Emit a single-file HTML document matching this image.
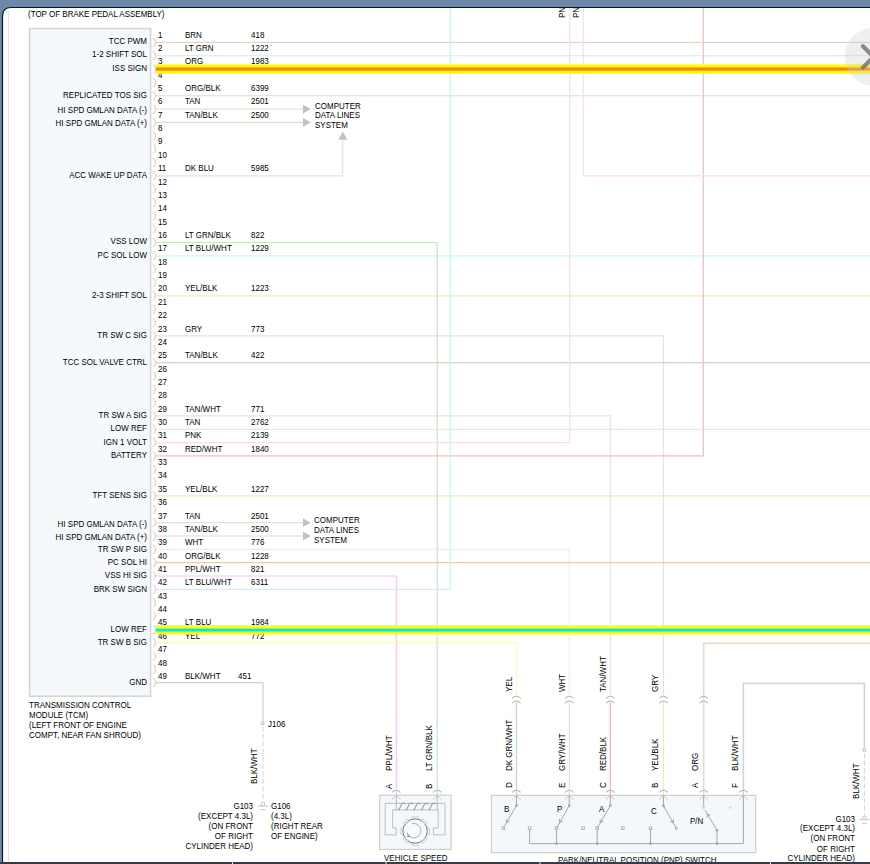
<!DOCTYPE html>
<html><head><meta charset="utf-8">
<style>
html,body{margin:0;padding:0;background:#fff;overflow:hidden;}
body{width:870px;height:864px;position:relative;}
svg{position:absolute;left:0;top:0;}
text{font-family:"Liberation Sans",sans-serif;}
</style></head><body>
<svg width="870" height="864" viewBox="0 0 870 864">
<rect x="0" y="0" width="870" height="864" fill="#ffffff"/>
<rect x="29.6" y="28.6" width="121" height="667.6" fill="#f6f9fc" stroke="#d6d6d6" stroke-width="1.6"/>
<line x1="156.00" y1="42.40" x2="872.00" y2="42.40" stroke="#e2d5ca" stroke-width="1.2" />
<line x1="156.00" y1="55.74" x2="872.00" y2="55.74" stroke="#c4f8c4" stroke-width="1.2" />
<line x1="156.00" y1="95.76" x2="872.00" y2="95.76" stroke="#efd6c2" stroke-width="1.2" />
<line x1="156.00" y1="109.10" x2="303.50" y2="109.10" stroke="#e6e2da" stroke-width="1.2" />
<polygon points="303,104.70 310.8,109.10 303,113.50" fill="#c2c2c2"/>
<line x1="156.00" y1="122.44" x2="303.50" y2="122.44" stroke="#dedbd2" stroke-width="1.2" />
<polygon points="303,118.04 310.8,122.44 303,126.84" fill="#c2c2c2"/>
<polyline points="156.00,175.80 342.80,175.80 342.80,139.50" fill="none" stroke="#dce2f2" stroke-width="1.2" />
<polygon points="338.3,139.8 342.8,131.6 347.3,139.8" fill="#c2c2c2"/>
<polyline points="156.00,242.50 437.20,242.50 437.20,795.00" fill="none" stroke="#c8e6c0" stroke-width="1.2" />
<line x1="156.00" y1="255.84" x2="872.00" y2="255.84" stroke="#c0fafa" stroke-width="1.2" />
<line x1="156.00" y1="295.86" x2="872.00" y2="295.86" stroke="#ecebc0" stroke-width="1.2" />
<polyline points="156.00,335.88 663.50,335.88 663.50,696.00" fill="none" stroke="#e2e2e2" stroke-width="1.2" />
<line x1="156.00" y1="362.56" x2="872.00" y2="362.56" stroke="#d6d4c8" stroke-width="1.2" />
<polyline points="156.00,415.92 610.30,415.92 610.30,696.00" fill="none" stroke="#e6e4d8" stroke-width="1.2" />
<line x1="156.00" y1="429.26" x2="872.00" y2="429.26" stroke="#e4e2d4" stroke-width="1.2" />
<polyline points="156.00,442.60 569.80,442.60 569.80,8.00" fill="none" stroke="#fbdde8" stroke-width="1.2" />
<polyline points="156.00,455.94 703.40,455.94 703.40,8.00" fill="none" stroke="#fcbcc4" stroke-width="1.2" />
<line x1="156.00" y1="495.96" x2="872.00" y2="495.96" stroke="#ecebb4" stroke-width="1.2" />
<line x1="156.00" y1="522.64" x2="303.50" y2="522.64" stroke="#e6e2da" stroke-width="1.2" />
<polygon points="303,518.24 310.8,522.64 303,527.04" fill="#c2c2c2"/>
<line x1="156.00" y1="535.98" x2="303.50" y2="535.98" stroke="#dedbd2" stroke-width="1.2" />
<polygon points="303,531.58 310.8,535.98 303,540.38" fill="#c2c2c2"/>
<polyline points="156.00,549.32 569.30,549.32 569.30,696.00" fill="none" stroke="#eeeeee" stroke-width="1.2" />
<line x1="156.00" y1="562.66" x2="872.00" y2="562.66" stroke="#e6cdb6" stroke-width="1.2" />
<polyline points="156.00,576.00 396.30,576.00 396.30,795.00" fill="none" stroke="#f6c6f6" stroke-width="1.2" />
<polyline points="156.00,589.34 450.20,589.34 450.20,8.00" fill="none" stroke="#c0f8f8" stroke-width="1.2" />
<polyline points="156.00,642.70 516.50,642.70 516.50,696.00" fill="none" stroke="#f8f8c0" stroke-width="1.2" />
<polyline points="156.00,682.72 263.00,682.72 263.00,721.50" fill="none" stroke="#d0d0d0" stroke-width="1.2" />
<polyline points="583.30,8.00 583.30,175.80 872.00,175.80" fill="none" stroke="#fbdde8" stroke-width="1.2" />
<polyline points="703.70,795.00 703.70,643.30 872.00,643.30" fill="none" stroke="#f6d6bc" stroke-width="1.5" />
<polyline points="743.40,795.00 743.40,683.60 864.40,683.60 864.40,747.50" fill="none" stroke="#d2d2d2" stroke-width="1.5" />
<line x1="516.50" y1="701.30" x2="516.50" y2="795.00" stroke="#c6d8c6" stroke-width="1.3" />
<path d="M512.20,698.50 Q516.50,694.10 520.80,698.50" fill="none" stroke="#b9b9b9" stroke-width="1.05"/>
<path d="M512.20,703.20 Q516.50,698.80 520.80,703.20" fill="none" stroke="#b9b9b9" stroke-width="1.05"/>
<line x1="569.30" y1="701.30" x2="569.30" y2="795.00" stroke="#e4e4e4" stroke-width="1.3" />
<path d="M565.00,698.50 Q569.30,694.10 573.60,698.50" fill="none" stroke="#b9b9b9" stroke-width="1.05"/>
<path d="M565.00,703.20 Q569.30,698.80 573.60,703.20" fill="none" stroke="#b9b9b9" stroke-width="1.05"/>
<line x1="610.30" y1="701.30" x2="610.30" y2="795.00" stroke="#f2b8b8" stroke-width="1.3" />
<path d="M606.00,698.50 Q610.30,694.10 614.60,698.50" fill="none" stroke="#b9b9b9" stroke-width="1.05"/>
<path d="M606.00,703.20 Q610.30,698.80 614.60,703.20" fill="none" stroke="#b9b9b9" stroke-width="1.05"/>
<line x1="663.50" y1="701.30" x2="663.50" y2="795.00" stroke="#ecebb0" stroke-width="1.3" />
<path d="M659.20,698.50 Q663.50,694.10 667.80,698.50" fill="none" stroke="#b9b9b9" stroke-width="1.05"/>
<path d="M659.20,703.20 Q663.50,698.80 667.80,703.20" fill="none" stroke="#b9b9b9" stroke-width="1.05"/>
<path d="M699.40,698.50 Q703.70,694.10 708.00,698.50" fill="none" stroke="#b9b9b9" stroke-width="1.05"/>
<path d="M699.40,703.20 Q703.70,698.80 708.00,703.20" fill="none" stroke="#b9b9b9" stroke-width="1.05"/>
<rect x="379.7" y="795.2" width="71.3" height="54.2" fill="#f5f8fb" stroke="#cfcfcf" stroke-width="1.2"/>
<path d="M385.2,803.4 H445 V834.8 H433.5 V827.9 H438.1 V809.9 H392.6 V827.9 H396.2 V834.8 H385.2 Z" fill="#f5f8fb" stroke="#c8c8c8" stroke-width="1.2"/>
<path d="M392.00,792.40 Q396.30,788.00 400.60,792.40" fill="none" stroke="#b9b9b9" stroke-width="1.05"/>
<polyline points="392.00,799.50 396.30,795.60 400.60,799.50" fill="none" stroke="#c6c6c6" stroke-width="1" />
<line x1="396.30" y1="795.50" x2="396.30" y2="810.00" stroke="#b8b8b8" stroke-width="1" />
<path d="M432.90,792.40 Q437.20,788.00 441.50,792.40" fill="none" stroke="#b9b9b9" stroke-width="1.05"/>
<polyline points="432.90,799.50 437.20,795.60 441.50,799.50" fill="none" stroke="#c6c6c6" stroke-width="1" />
<line x1="437.20" y1="795.50" x2="437.20" y2="810.00" stroke="#b8b8b8" stroke-width="1" />
<path d="M396.3,810 M398.5,810.5 L401.9,803.8 Q404.1,802 405.5,804.2 M406.1,810.5 L409.5,803.8 Q411.7,802 413.1,804.2 M413.7,810.5 L417.1,803.8 Q419.3,802 420.7,804.2 M421.3,810.5 L424.7,803.8 Q426.9,802 428.3,804.2 M428.9,810.5 L432.3,803.8 Q434.5,802 435.9,804.2 " fill="none" stroke="#9a9a9a" stroke-width="1.1"/>
<circle cx="415.1" cy="831.1" r="12.2" fill="#f7f9fb" stroke="#6a6a6a" stroke-width="1"/>
<rect x="-3" y="-14.2" width="6" height="2.2" fill="none" stroke="#c4c4c4" stroke-width="0.8" transform="translate(415.1,831.1) rotate(0)"/>
<rect x="-3" y="-14.2" width="6" height="2.2" fill="none" stroke="#c4c4c4" stroke-width="0.8" transform="translate(415.1,831.1) rotate(45)"/>
<rect x="-3" y="-14.2" width="6" height="2.2" fill="none" stroke="#c4c4c4" stroke-width="0.8" transform="translate(415.1,831.1) rotate(90)"/>
<rect x="-3" y="-14.2" width="6" height="2.2" fill="none" stroke="#c4c4c4" stroke-width="0.8" transform="translate(415.1,831.1) rotate(135)"/>
<rect x="-3" y="-14.2" width="6" height="2.2" fill="none" stroke="#c4c4c4" stroke-width="0.8" transform="translate(415.1,831.1) rotate(180)"/>
<rect x="-3" y="-14.2" width="6" height="2.2" fill="none" stroke="#c4c4c4" stroke-width="0.8" transform="translate(415.1,831.1) rotate(225)"/>
<rect x="-3" y="-14.2" width="6" height="2.2" fill="none" stroke="#c4c4c4" stroke-width="0.8" transform="translate(415.1,831.1) rotate(270)"/>
<rect x="-3" y="-14.2" width="6" height="2.2" fill="none" stroke="#c4c4c4" stroke-width="0.8" transform="translate(415.1,831.1) rotate(315)"/>
<path d="M412,823.6 A7.2,7.2 0 1 1 409.5,836.5" fill="none" stroke="#bdbdbd" stroke-width="1.1"/>
<path d="M407.0,832.8 L409.6,836.6 L406.6,836.0" fill="none" stroke="#777" stroke-width="0.9"/>
<rect x="491.5" y="795.4" width="264.2" height="57.3" fill="#f5f8fb" stroke="#cfcfcf" stroke-width="1.2"/>
<path d="M512.20,792.40 Q516.50,788.00 520.80,792.40" fill="none" stroke="#b9b9b9" stroke-width="1.05"/>
<polyline points="512.20,799.50 516.50,795.60 520.80,799.50" fill="none" stroke="#c6c6c6" stroke-width="1" />
<path d="M565.00,792.40 Q569.30,788.00 573.60,792.40" fill="none" stroke="#b9b9b9" stroke-width="1.05"/>
<polyline points="565.00,799.50 569.30,795.60 573.60,799.50" fill="none" stroke="#c6c6c6" stroke-width="1" />
<path d="M606.00,792.40 Q610.30,788.00 614.60,792.40" fill="none" stroke="#b9b9b9" stroke-width="1.05"/>
<polyline points="606.00,799.50 610.30,795.60 614.60,799.50" fill="none" stroke="#c6c6c6" stroke-width="1" />
<path d="M659.20,792.40 Q663.50,788.00 667.80,792.40" fill="none" stroke="#b9b9b9" stroke-width="1.05"/>
<polyline points="659.20,799.50 663.50,795.60 667.80,799.50" fill="none" stroke="#c6c6c6" stroke-width="1" />
<path d="M699.40,792.40 Q703.70,788.00 708.00,792.40" fill="none" stroke="#b9b9b9" stroke-width="1.05"/>
<polyline points="699.40,799.50 703.70,795.60 708.00,799.50" fill="none" stroke="#c6c6c6" stroke-width="1" />
<path d="M739.10,792.40 Q743.40,788.00 747.70,792.40" fill="none" stroke="#b9b9b9" stroke-width="1.05"/>
<polyline points="739.10,799.50 743.40,795.60 747.70,799.50" fill="none" stroke="#c6c6c6" stroke-width="1" />
<line x1="516.50" y1="795.50" x2="516.50" y2="805.60" stroke="#a8a8a8" stroke-width="1" />
<circle cx="516.50" cy="805.60" r="1.3" fill="#a0a0a0"/>
<line x1="516.50" y1="805.60" x2="503.40" y2="828.00" stroke="#a8a8a8" stroke-width="1" />
<polyline points="506.40,819.10 506.43,822.82 509.68,821.02" fill="none" stroke="#a8a8a8" stroke-width="1" />
<rect x="502.10" y="826.90" width="2.6" height="2.6" fill="none" stroke="#b0b0b0" stroke-width="0.9"/>
<rect x="528.30" y="826.90" width="2.6" height="2.6" fill="none" stroke="#b0b0b0" stroke-width="0.9"/>
<line x1="529.60" y1="829.50" x2="529.60" y2="843.60" stroke="#a8a8a8" stroke-width="1" />
<line x1="569.30" y1="795.50" x2="569.30" y2="805.60" stroke="#a8a8a8" stroke-width="1" />
<circle cx="569.30" cy="805.60" r="1.3" fill="#a0a0a0"/>
<line x1="569.30" y1="805.60" x2="556.60" y2="828.00" stroke="#a8a8a8" stroke-width="1" />
<polyline points="559.48,819.06 559.56,822.78 562.79,820.93" fill="none" stroke="#a8a8a8" stroke-width="1" />
<rect x="555.30" y="826.90" width="2.6" height="2.6" fill="none" stroke="#b0b0b0" stroke-width="0.9"/>
<line x1="556.60" y1="829.50" x2="556.60" y2="843.60" stroke="#a8a8a8" stroke-width="1" />
<circle cx="556.60" cy="843.60" r="1.4" fill="#a0a0a0"/>
<rect x="581.70" y="826.90" width="2.6" height="2.6" fill="none" stroke="#b0b0b0" stroke-width="0.9"/>
<line x1="610.30" y1="795.50" x2="610.30" y2="805.60" stroke="#a8a8a8" stroke-width="1" />
<circle cx="610.30" cy="805.60" r="1.3" fill="#a0a0a0"/>
<line x1="610.30" y1="805.60" x2="597.20" y2="828.00" stroke="#a8a8a8" stroke-width="1" />
<polyline points="600.20,819.10 600.23,822.82 603.48,821.02" fill="none" stroke="#a8a8a8" stroke-width="1" />
<rect x="595.90" y="826.90" width="2.6" height="2.6" fill="none" stroke="#b0b0b0" stroke-width="0.9"/>
<line x1="597.20" y1="829.50" x2="597.20" y2="843.60" stroke="#a8a8a8" stroke-width="1" />
<circle cx="597.20" cy="843.60" r="1.4" fill="#a0a0a0"/>
<rect x="621.60" y="826.90" width="2.6" height="2.6" fill="none" stroke="#b0b0b0" stroke-width="0.9"/>
<line x1="663.50" y1="795.50" x2="663.50" y2="805.90" stroke="#a8a8a8" stroke-width="1" />
<circle cx="663.50" cy="805.90" r="1.3" fill="#a0a0a0"/>
<line x1="663.50" y1="805.90" x2="676.40" y2="828.30" stroke="#a8a8a8" stroke-width="1" />
<polyline points="670.16,821.28 673.41,823.10 673.46,819.38" fill="none" stroke="#a8a8a8" stroke-width="1" />
<circle cx="676.4" cy="828.3" r="1.2" fill="none" stroke="#a8a8a8" stroke-width="0.9"/>
<rect x="649.20" y="827.00" width="2.6" height="2.6" fill="none" stroke="#b0b0b0" stroke-width="0.9"/>
<line x1="650.50" y1="829.60" x2="650.50" y2="843.60" stroke="#a8a8a8" stroke-width="1" />
<circle cx="650.50" cy="843.60" r="1.4" fill="#a0a0a0"/>
<line x1="703.70" y1="795.50" x2="703.70" y2="806.20" stroke="#a8a8a8" stroke-width="1" />
<circle cx="703.70" cy="807.60" r="1.4" fill="#cfcfcf"/>
<line x1="705.20" y1="810.30" x2="717.00" y2="830.50" stroke="#a8a8a8" stroke-width="1" />
<polyline points="707.19,817.48 707.22,813.75 710.47,815.56" fill="none" stroke="#a8a8a8" stroke-width="1" />
<circle cx="717.00" cy="830.30" r="1.3" fill="#a0a0a0"/>
<line x1="717.00" y1="830.30" x2="717.00" y2="843.60" stroke="#a8a8a8" stroke-width="1" />
<circle cx="717.00" cy="843.60" r="1.4" fill="#a0a0a0"/>
<circle cx="730.20" cy="807.60" r="1.4" fill="#d8d8d8"/>
<polyline points="529.60,843.60 743.40,843.60 743.40,795.50" fill="none" stroke="#a8a8a8" stroke-width="1" />
<rect x="261.20" y="722.10" width="2.6" height="2.6" fill="none" stroke="#c0c0c0" stroke-width="0.9"/>
<line x1="263.00" y1="726.50" x2="263.00" y2="802.00" stroke="#d4d4d4" stroke-width="1" stroke-dasharray="5,2.5"/>
<rect x="261.50" y="802.60" width="3" height="2.8" fill="none" stroke="#c8c8c8" stroke-width="0.8"/>
<line x1="257.80" y1="806.00" x2="268.20" y2="806.00" stroke="#c4c4c4" stroke-width="1" />
<line x1="260.40" y1="809.60" x2="265.60" y2="809.60" stroke="#c8c8c8" stroke-width="1" />
<rect x="863.10" y="748.70" width="2.6" height="2.6" fill="none" stroke="#c0c0c0" stroke-width="0.9"/>
<line x1="864.40" y1="753.20" x2="864.40" y2="815.50" stroke="#d4d4d4" stroke-width="1" stroke-dasharray="5,2.5"/>
<rect x="862.90" y="816.30" width="3" height="2.8" fill="none" stroke="#c8c8c8" stroke-width="0.8"/>
<line x1="859.20" y1="819.70" x2="869.60" y2="819.70" stroke="#c4c4c4" stroke-width="1" />
<line x1="861.80" y1="823.30" x2="867.00" y2="823.30" stroke="#c8c8c8" stroke-width="1" />
<path d="M153.4,37.80 Q157.6,42.40 153.4,47.00" fill="none" stroke="#c8c8c8" stroke-width="1"/>
<path d="M153.4,51.14 Q157.6,55.74 153.4,60.34" fill="none" stroke="#c8c8c8" stroke-width="1"/>
<path d="M153.4,64.48 Q157.6,69.08 153.4,73.68" fill="none" stroke="#c8c8c8" stroke-width="1"/>
<path d="M153.4,77.82 Q157.6,82.42 153.4,87.02" fill="none" stroke="#c8c8c8" stroke-width="1"/>
<path d="M153.4,91.16 Q157.6,95.76 153.4,100.36" fill="none" stroke="#c8c8c8" stroke-width="1"/>
<path d="M153.4,104.50 Q157.6,109.10 153.4,113.70" fill="none" stroke="#c8c8c8" stroke-width="1"/>
<path d="M153.4,117.84 Q157.6,122.44 153.4,127.04" fill="none" stroke="#c8c8c8" stroke-width="1"/>
<path d="M153.4,131.18 Q157.6,135.78 153.4,140.38" fill="none" stroke="#c8c8c8" stroke-width="1"/>
<path d="M153.4,144.52 Q157.6,149.12 153.4,153.72" fill="none" stroke="#c8c8c8" stroke-width="1"/>
<path d="M153.4,157.86 Q157.6,162.46 153.4,167.06" fill="none" stroke="#c8c8c8" stroke-width="1"/>
<path d="M153.4,171.20 Q157.6,175.80 153.4,180.40" fill="none" stroke="#c8c8c8" stroke-width="1"/>
<path d="M153.4,184.54 Q157.6,189.14 153.4,193.74" fill="none" stroke="#c8c8c8" stroke-width="1"/>
<path d="M153.4,197.88 Q157.6,202.48 153.4,207.08" fill="none" stroke="#c8c8c8" stroke-width="1"/>
<path d="M153.4,211.22 Q157.6,215.82 153.4,220.42" fill="none" stroke="#c8c8c8" stroke-width="1"/>
<path d="M153.4,224.56 Q157.6,229.16 153.4,233.76" fill="none" stroke="#c8c8c8" stroke-width="1"/>
<path d="M153.4,237.90 Q157.6,242.50 153.4,247.10" fill="none" stroke="#c8c8c8" stroke-width="1"/>
<path d="M153.4,251.24 Q157.6,255.84 153.4,260.44" fill="none" stroke="#c8c8c8" stroke-width="1"/>
<path d="M153.4,264.58 Q157.6,269.18 153.4,273.78" fill="none" stroke="#c8c8c8" stroke-width="1"/>
<path d="M153.4,277.92 Q157.6,282.52 153.4,287.12" fill="none" stroke="#c8c8c8" stroke-width="1"/>
<path d="M153.4,291.26 Q157.6,295.86 153.4,300.46" fill="none" stroke="#c8c8c8" stroke-width="1"/>
<path d="M153.4,304.60 Q157.6,309.20 153.4,313.80" fill="none" stroke="#c8c8c8" stroke-width="1"/>
<path d="M153.4,317.94 Q157.6,322.54 153.4,327.14" fill="none" stroke="#c8c8c8" stroke-width="1"/>
<path d="M153.4,331.28 Q157.6,335.88 153.4,340.48" fill="none" stroke="#c8c8c8" stroke-width="1"/>
<path d="M153.4,344.62 Q157.6,349.22 153.4,353.82" fill="none" stroke="#c8c8c8" stroke-width="1"/>
<path d="M153.4,357.96 Q157.6,362.56 153.4,367.16" fill="none" stroke="#c8c8c8" stroke-width="1"/>
<path d="M153.4,371.30 Q157.6,375.90 153.4,380.50" fill="none" stroke="#c8c8c8" stroke-width="1"/>
<path d="M153.4,384.64 Q157.6,389.24 153.4,393.84" fill="none" stroke="#c8c8c8" stroke-width="1"/>
<path d="M153.4,397.98 Q157.6,402.58 153.4,407.18" fill="none" stroke="#c8c8c8" stroke-width="1"/>
<path d="M153.4,411.32 Q157.6,415.92 153.4,420.52" fill="none" stroke="#c8c8c8" stroke-width="1"/>
<path d="M153.4,424.66 Q157.6,429.26 153.4,433.86" fill="none" stroke="#c8c8c8" stroke-width="1"/>
<path d="M153.4,438.00 Q157.6,442.60 153.4,447.20" fill="none" stroke="#c8c8c8" stroke-width="1"/>
<path d="M153.4,451.34 Q157.6,455.94 153.4,460.54" fill="none" stroke="#c8c8c8" stroke-width="1"/>
<path d="M153.4,464.68 Q157.6,469.28 153.4,473.88" fill="none" stroke="#c8c8c8" stroke-width="1"/>
<path d="M153.4,478.02 Q157.6,482.62 153.4,487.22" fill="none" stroke="#c8c8c8" stroke-width="1"/>
<path d="M153.4,491.36 Q157.6,495.96 153.4,500.56" fill="none" stroke="#c8c8c8" stroke-width="1"/>
<path d="M153.4,504.70 Q157.6,509.30 153.4,513.90" fill="none" stroke="#c8c8c8" stroke-width="1"/>
<path d="M153.4,518.04 Q157.6,522.64 153.4,527.24" fill="none" stroke="#c8c8c8" stroke-width="1"/>
<path d="M153.4,531.38 Q157.6,535.98 153.4,540.58" fill="none" stroke="#c8c8c8" stroke-width="1"/>
<path d="M153.4,544.72 Q157.6,549.32 153.4,553.92" fill="none" stroke="#c8c8c8" stroke-width="1"/>
<path d="M153.4,558.06 Q157.6,562.66 153.4,567.26" fill="none" stroke="#c8c8c8" stroke-width="1"/>
<path d="M153.4,571.40 Q157.6,576.00 153.4,580.60" fill="none" stroke="#c8c8c8" stroke-width="1"/>
<path d="M153.4,584.74 Q157.6,589.34 153.4,593.94" fill="none" stroke="#c8c8c8" stroke-width="1"/>
<path d="M153.4,598.08 Q157.6,602.68 153.4,607.28" fill="none" stroke="#c8c8c8" stroke-width="1"/>
<path d="M153.4,611.42 Q157.6,616.02 153.4,620.62" fill="none" stroke="#c8c8c8" stroke-width="1"/>
<path d="M153.4,624.76 Q157.6,629.36 153.4,633.96" fill="none" stroke="#c8c8c8" stroke-width="1"/>
<path d="M153.4,638.10 Q157.6,642.70 153.4,647.30" fill="none" stroke="#c8c8c8" stroke-width="1"/>
<path d="M153.4,651.44 Q157.6,656.04 153.4,660.64" fill="none" stroke="#c8c8c8" stroke-width="1"/>
<path d="M153.4,664.78 Q157.6,669.38 153.4,673.98" fill="none" stroke="#c8c8c8" stroke-width="1"/>
<path d="M153.4,678.12 Q157.6,682.72 153.4,687.32" fill="none" stroke="#c8c8c8" stroke-width="1"/>
<g font-family="Liberation Sans, sans-serif" font-size="8px" fill="#000">
<text transform="translate(28,17) scale(1,1.09)" text-anchor="start" >(TOP OF BRAKE PEDAL ASSEMBLY)</text>
<text transform="translate(158,38) scale(1,1.09)" text-anchor="start" >1</text>
<text transform="translate(158,51) scale(1,1.09)" text-anchor="start" >2</text>
<text transform="translate(158,64) scale(1,1.09)" text-anchor="start" >3</text>
<text transform="translate(158,78) scale(1,1.09)" text-anchor="start" >4</text>
<text transform="translate(158,91) scale(1,1.09)" text-anchor="start" >5</text>
<text transform="translate(158,104) scale(1,1.09)" text-anchor="start" >6</text>
<text transform="translate(158,118) scale(1,1.09)" text-anchor="start" >7</text>
<text transform="translate(158,131) scale(1,1.09)" text-anchor="start" >8</text>
<text transform="translate(158,144) scale(1,1.09)" text-anchor="start" >9</text>
<text transform="translate(158,158) scale(1,1.09)" text-anchor="start" >10</text>
<text transform="translate(158,171) scale(1,1.09)" text-anchor="start" >11</text>
<text transform="translate(158,185) scale(1,1.09)" text-anchor="start" >12</text>
<text transform="translate(158,198) scale(1,1.09)" text-anchor="start" >13</text>
<text transform="translate(158,211) scale(1,1.09)" text-anchor="start" >14</text>
<text transform="translate(158,225) scale(1,1.09)" text-anchor="start" >15</text>
<text transform="translate(158,238) scale(1,1.09)" text-anchor="start" >16</text>
<text transform="translate(158,251) scale(1,1.09)" text-anchor="start" >17</text>
<text transform="translate(158,265) scale(1,1.09)" text-anchor="start" >18</text>
<text transform="translate(158,278) scale(1,1.09)" text-anchor="start" >19</text>
<text transform="translate(158,291) scale(1,1.09)" text-anchor="start" >20</text>
<text transform="translate(158,305) scale(1,1.09)" text-anchor="start" >21</text>
<text transform="translate(158,318) scale(1,1.09)" text-anchor="start" >22</text>
<text transform="translate(158,332) scale(1,1.09)" text-anchor="start" >23</text>
<text transform="translate(158,345) scale(1,1.09)" text-anchor="start" >24</text>
<text transform="translate(158,358) scale(1,1.09)" text-anchor="start" >25</text>
<text transform="translate(158,372) scale(1,1.09)" text-anchor="start" >26</text>
<text transform="translate(158,385) scale(1,1.09)" text-anchor="start" >27</text>
<text transform="translate(158,398) scale(1,1.09)" text-anchor="start" >28</text>
<text transform="translate(158,412) scale(1,1.09)" text-anchor="start" >29</text>
<text transform="translate(158,425) scale(1,1.09)" text-anchor="start" >30</text>
<text transform="translate(158,438) scale(1,1.09)" text-anchor="start" >31</text>
<text transform="translate(158,452) scale(1,1.09)" text-anchor="start" >32</text>
<text transform="translate(158,465) scale(1,1.09)" text-anchor="start" >33</text>
<text transform="translate(158,478) scale(1,1.09)" text-anchor="start" >34</text>
<text transform="translate(158,492) scale(1,1.09)" text-anchor="start" >35</text>
<text transform="translate(158,505) scale(1,1.09)" text-anchor="start" >36</text>
<text transform="translate(158,519) scale(1,1.09)" text-anchor="start" >37</text>
<text transform="translate(158,532) scale(1,1.09)" text-anchor="start" >38</text>
<text transform="translate(158,545) scale(1,1.09)" text-anchor="start" >39</text>
<text transform="translate(158,559) scale(1,1.09)" text-anchor="start" >40</text>
<text transform="translate(158,572) scale(1,1.09)" text-anchor="start" >41</text>
<text transform="translate(158,585) scale(1,1.09)" text-anchor="start" >42</text>
<text transform="translate(158,599) scale(1,1.09)" text-anchor="start" >43</text>
<text transform="translate(158,612) scale(1,1.09)" text-anchor="start" >44</text>
<text transform="translate(158,625) scale(1,1.09)" text-anchor="start" >45</text>
<text transform="translate(158,639) scale(1,1.09)" text-anchor="start" >46</text>
<text transform="translate(158,652) scale(1,1.09)" text-anchor="start" >47</text>
<text transform="translate(158,666) scale(1,1.09)" text-anchor="start" >48</text>
<text transform="translate(158,679) scale(1,1.09)" text-anchor="start" >49</text>
<text transform="translate(185,38) scale(1,1.09)" text-anchor="start" >BRN</text>
<text transform="translate(251,38) scale(1,1.09)" text-anchor="start" >418</text>
<text transform="translate(185,51) scale(1,1.09)" text-anchor="start" >LT GRN</text>
<text transform="translate(251,51) scale(1,1.09)" text-anchor="start" >1222</text>
<text transform="translate(185,64) scale(1,1.09)" text-anchor="start" >ORG</text>
<text transform="translate(251,64) scale(1,1.09)" text-anchor="start" >1983</text>
<text transform="translate(185,91) scale(1,1.09)" text-anchor="start" >ORG/BLK</text>
<text transform="translate(251,91) scale(1,1.09)" text-anchor="start" >6399</text>
<text transform="translate(185,104) scale(1,1.09)" text-anchor="start" >TAN</text>
<text transform="translate(251,104) scale(1,1.09)" text-anchor="start" >2501</text>
<text transform="translate(185,118) scale(1,1.09)" text-anchor="start" >TAN/BLK</text>
<text transform="translate(251,118) scale(1,1.09)" text-anchor="start" >2500</text>
<text transform="translate(185,171) scale(1,1.09)" text-anchor="start" >DK BLU</text>
<text transform="translate(251,171) scale(1,1.09)" text-anchor="start" >5985</text>
<text transform="translate(185,238) scale(1,1.09)" text-anchor="start" >LT GRN/BLK</text>
<text transform="translate(251,238) scale(1,1.09)" text-anchor="start" >822</text>
<text transform="translate(185,251) scale(1,1.09)" text-anchor="start" >LT BLU/WHT</text>
<text transform="translate(251,251) scale(1,1.09)" text-anchor="start" >1229</text>
<text transform="translate(185,291) scale(1,1.09)" text-anchor="start" >YEL/BLK</text>
<text transform="translate(251,291) scale(1,1.09)" text-anchor="start" >1223</text>
<text transform="translate(185,332) scale(1,1.09)" text-anchor="start" >GRY</text>
<text transform="translate(251,332) scale(1,1.09)" text-anchor="start" >773</text>
<text transform="translate(185,358) scale(1,1.09)" text-anchor="start" >TAN/BLK</text>
<text transform="translate(251,358) scale(1,1.09)" text-anchor="start" >422</text>
<text transform="translate(185,412) scale(1,1.09)" text-anchor="start" >TAN/WHT</text>
<text transform="translate(251,412) scale(1,1.09)" text-anchor="start" >771</text>
<text transform="translate(185,425) scale(1,1.09)" text-anchor="start" >TAN</text>
<text transform="translate(251,425) scale(1,1.09)" text-anchor="start" >2762</text>
<text transform="translate(185,438) scale(1,1.09)" text-anchor="start" >PNK</text>
<text transform="translate(251,438) scale(1,1.09)" text-anchor="start" >2139</text>
<text transform="translate(185,452) scale(1,1.09)" text-anchor="start" >RED/WHT</text>
<text transform="translate(251,452) scale(1,1.09)" text-anchor="start" >1840</text>
<text transform="translate(185,492) scale(1,1.09)" text-anchor="start" >YEL/BLK</text>
<text transform="translate(251,492) scale(1,1.09)" text-anchor="start" >1227</text>
<text transform="translate(185,519) scale(1,1.09)" text-anchor="start" >TAN</text>
<text transform="translate(251,519) scale(1,1.09)" text-anchor="start" >2501</text>
<text transform="translate(185,532) scale(1,1.09)" text-anchor="start" >TAN/BLK</text>
<text transform="translate(251,532) scale(1,1.09)" text-anchor="start" >2500</text>
<text transform="translate(185,545) scale(1,1.09)" text-anchor="start" >WHT</text>
<text transform="translate(251,545) scale(1,1.09)" text-anchor="start" >776</text>
<text transform="translate(185,559) scale(1,1.09)" text-anchor="start" >ORG/BLK</text>
<text transform="translate(251,559) scale(1,1.09)" text-anchor="start" >1228</text>
<text transform="translate(185,572) scale(1,1.09)" text-anchor="start" >PPL/WHT</text>
<text transform="translate(251,572) scale(1,1.09)" text-anchor="start" >821</text>
<text transform="translate(185,585) scale(1,1.09)" text-anchor="start" >LT BLU/WHT</text>
<text transform="translate(251,585) scale(1,1.09)" text-anchor="start" >6311</text>
<text transform="translate(185,625) scale(1,1.09)" text-anchor="start" >LT BLU</text>
<text transform="translate(251,625) scale(1,1.09)" text-anchor="start" >1984</text>
<text transform="translate(185,639) scale(1,1.09)" text-anchor="start" >YEL</text>
<text transform="translate(251,639) scale(1,1.09)" text-anchor="start" >772</text>
<text transform="translate(185,679) scale(1,1.09)" text-anchor="start" >BLK/WHT</text>
<text transform="translate(238,679) scale(1,1.09)" text-anchor="start" >451</text>
<text transform="translate(147,44) scale(1,1.09)" text-anchor="end" >TCC PWM</text>
<text transform="translate(147,57) scale(1,1.09)" text-anchor="end" >1-2 SHIFT SOL</text>
<text transform="translate(147,71) scale(1,1.09)" text-anchor="end" >ISS SIGN</text>
<text transform="translate(147,98) scale(1,1.09)" text-anchor="end" >REPLICATED TOS SIG</text>
<text transform="translate(147,113) scale(1,1.09)" text-anchor="end" >HI SPD GMLAN DATA (-)</text>
<text transform="translate(147,126) scale(1,1.09)" text-anchor="end" >HI SPD GMLAN DATA (+)</text>
<text transform="translate(147,178) scale(1,1.09)" text-anchor="end" >ACC WAKE UP DATA</text>
<text transform="translate(147,244) scale(1,1.09)" text-anchor="end" >VSS LOW</text>
<text transform="translate(147,258) scale(1,1.09)" text-anchor="end" >PC SOL LOW</text>
<text transform="translate(147,298) scale(1,1.09)" text-anchor="end" >2-3 SHIFT SOL</text>
<text transform="translate(147,338) scale(1,1.09)" text-anchor="end" >TR SW C SIG</text>
<text transform="translate(147,365) scale(1,1.09)" text-anchor="end" >TCC SOL VALVE CTRL</text>
<text transform="translate(147,418) scale(1,1.09)" text-anchor="end" >TR SW A SIG</text>
<text transform="translate(147,431) scale(1,1.09)" text-anchor="end" >LOW REF</text>
<text transform="translate(147,445) scale(1,1.09)" text-anchor="end" >IGN 1 VOLT</text>
<text transform="translate(147,458) scale(1,1.09)" text-anchor="end" >BATTERY</text>
<text transform="translate(147,498) scale(1,1.09)" text-anchor="end" >TFT SENS SIG</text>
<text transform="translate(147,527) scale(1,1.09)" text-anchor="end" >HI SPD GMLAN DATA (-)</text>
<text transform="translate(147,540) scale(1,1.09)" text-anchor="end" >HI SPD GMLAN DATA (+)</text>
<text transform="translate(147,552) scale(1,1.09)" text-anchor="end" >TR SW P SIG</text>
<text transform="translate(147,565) scale(1,1.09)" text-anchor="end" >PC SOL HI</text>
<text transform="translate(147,578) scale(1,1.09)" text-anchor="end" >VSS HI SIG</text>
<text transform="translate(147,592) scale(1,1.09)" text-anchor="end" >BRK SW SIGN</text>
<text transform="translate(147,632) scale(1,1.09)" text-anchor="end" >LOW REF</text>
<text transform="translate(147,645) scale(1,1.09)" text-anchor="end" >TR SW B SIG</text>
<text transform="translate(147,685) scale(1,1.09)" text-anchor="end" >GND</text>
<text transform="translate(29,708) scale(1,1.09)" text-anchor="start" >TRANSMISSION CONTROL</text>
<text transform="translate(29,718) scale(1,1.09)" text-anchor="start" >MODULE (TCM)</text>
<text transform="translate(29,728) scale(1,1.09)" text-anchor="start" >(LEFT FRONT OF ENGINE</text>
<text transform="translate(29,738) scale(1,1.09)" text-anchor="start" >COMPT, NEAR FAN SHROUD)</text>
<text transform="translate(315,109) scale(1,1.09)" text-anchor="start" >COMPUTER</text>
<text transform="translate(315,118) scale(1,1.09)" text-anchor="start" >DATA LINES</text>
<text transform="translate(315,128) scale(1,1.09)" text-anchor="start" >SYSTEM</text>
<text transform="translate(314,523) scale(1,1.09)" text-anchor="start" >COMPUTER</text>
<text transform="translate(314,533) scale(1,1.09)" text-anchor="start" >DATA LINES</text>
<text transform="translate(314,543) scale(1,1.09)" text-anchor="start" >SYSTEM</text>
<text transform="translate(512,692) rotate(-90) scale(1,1.09)" x="0" y="0">YEL</text>
<text transform="translate(512,771) rotate(-90) scale(1,1.09)" x="0" y="0">DK GRN/WHT</text>
<text transform="translate(512,788) rotate(-90) scale(1,1.09)" x="0" y="0">D</text>
<text transform="translate(565,692) rotate(-90) scale(1,1.09)" x="0" y="0">WHT</text>
<text transform="translate(565,771) rotate(-90) scale(1,1.09)" x="0" y="0">GRY/WHT</text>
<text transform="translate(565,788) rotate(-90) scale(1,1.09)" x="0" y="0">E</text>
<text transform="translate(606,692) rotate(-90) scale(1,1.09)" x="0" y="0">TAN/WHT</text>
<text transform="translate(606,771) rotate(-90) scale(1,1.09)" x="0" y="0">RED/BLK</text>
<text transform="translate(606,788) rotate(-90) scale(1,1.09)" x="0" y="0">C</text>
<text transform="translate(658,692) rotate(-90) scale(1,1.09)" x="0" y="0">GRY</text>
<text transform="translate(658,771) rotate(-90) scale(1,1.09)" x="0" y="0">YEL/BLK</text>
<text transform="translate(658,788) rotate(-90) scale(1,1.09)" x="0" y="0">B</text>
<text transform="translate(698,771) rotate(-90) scale(1,1.09)" x="0" y="0">ORG</text>
<text transform="translate(698,788) rotate(-90) scale(1,1.09)" x="0" y="0">A</text>
<text transform="translate(738,771) rotate(-90) scale(1,1.09)" x="0" y="0">BLK/WHT</text>
<text transform="translate(738,788) rotate(-90) scale(1,1.09)" x="0" y="0">F</text>
<text transform="translate(392,771) rotate(-90) scale(1,1.09)" x="0" y="0">PPL/WHT</text>
<text transform="translate(392,789) rotate(-90) scale(1,1.09)" x="0" y="0">A</text>
<text transform="translate(432,771) rotate(-90) scale(1,1.09)" x="0" y="0">LT GRN/BLK</text>
<text transform="translate(432,789) rotate(-90) scale(1,1.09)" x="0" y="0">B</text>
<text transform="translate(257,784) rotate(-90) scale(1,1.09)" x="0" y="0">BLK/WHT</text>
<text transform="translate(859,799) rotate(-90) scale(1,1.09)" x="0" y="0">BLK/WHT</text>
<text transform="translate(565,18) rotate(-90) scale(1,1.09)" x="0" y="0">PNK</text>
<text transform="translate(579,18) rotate(-90) scale(1,1.09)" x="0" y="0">PNK</text>
<text transform="translate(268,727) scale(1,1.09)" text-anchor="start" >J106</text>
<text transform="translate(253,809) scale(1,1.09)" text-anchor="end" >G103</text>
<text transform="translate(253,819) scale(1,1.09)" text-anchor="end" >(EXCEPT 4.3L)</text>
<text transform="translate(253,829) scale(1,1.09)" text-anchor="end" >(ON FRONT</text>
<text transform="translate(253,839) scale(1,1.09)" text-anchor="end" >OF RIGHT</text>
<text transform="translate(253,849) scale(1,1.09)" text-anchor="end" >CYLINDER HEAD)</text>
<text transform="translate(271,809) scale(1,1.09)" text-anchor="start" >G106</text>
<text transform="translate(271,819) scale(1,1.09)" text-anchor="start" >(4.3L)</text>
<text transform="translate(271,829) scale(1,1.09)" text-anchor="start" >(RIGHT REAR</text>
<text transform="translate(271,839) scale(1,1.09)" text-anchor="start" >OF ENGINE)</text>
<text transform="translate(855,822) scale(1,1.09)" text-anchor="end" >G103</text>
<text transform="translate(855,831) scale(1,1.09)" text-anchor="end" >(EXCEPT 4.3L)</text>
<text transform="translate(855,841) scale(1,1.09)" text-anchor="end" >(ON FRONT</text>
<text transform="translate(855,852) scale(1,1.09)" text-anchor="end" >OF RIGHT</text>
<text transform="translate(855,861) scale(1,1.09)" text-anchor="end" >CYLINDER HEAD)</text>
<text transform="translate(384,861) scale(1,1.09)" text-anchor="start" >VEHICLE SPEED</text>
<text transform="translate(558,863) scale(1,1.09)" text-anchor="start" >PARK/NEUTRAL POSITION (PNP) SWITCH</text>
<text transform="translate(504,812) scale(1,1.09)" text-anchor="start" >B</text>
<text transform="translate(557,812) scale(1,1.09)" text-anchor="start" >P</text>
<text transform="translate(599,812) scale(1,1.09)" text-anchor="start" >A</text>
<text transform="translate(651,814) scale(1,1.09)" text-anchor="start" >C</text>
<text transform="translate(690,824) scale(1,1.09)" text-anchor="start" >P/N</text>
</g>
<rect x="156" y="64.38" width="716" height="9.5" fill="#ffff00"/>
<rect x="156" y="67.48" width="716" height="3.1" fill="#ff8000"/>
<rect x="156" y="625.16" width="716" height="9.3" fill="#ffff00"/>
<rect x="156" y="628.56" width="716" height="3.0" fill="#00e8f8"/>
<circle cx="873.7" cy="56.8" r="29" fill="rgba(205,205,205,0.32)"/>
<path d="M863,46.3 L884.4,67.7 M863,67.5 L884.4,46.1" stroke="rgba(110,110,110,0.8)" stroke-width="4.2" stroke-linecap="round"/>
<!-- frame -->
<path d="M0,0 H870 V7.5 H11 Q2.5,7.5 2.5,16 V864 H0 Z" fill="#6d89a7"/>
<path d="M870,7.5 H11 Q2.5,7.5 2.5,16 V862" fill="none" stroke="#0e1620" stroke-width="1.2"/>
<line x1="8.5" y1="11" x2="8.5" y2="862" stroke="#e2e2e2" stroke-width="1"/>
<rect x="0" y="862" width="870" height="2" fill="#343c48"/>
<rect x="232" y="862" width="1" height="2" fill="#dfe3e8"/><rect x="385.5" y="862" width="1" height="2" fill="#dfe3e8"/><rect x="539.5" y="862" width="1" height="2" fill="#dfe3e8"/><rect x="770" y="862" width="1" height="2" fill="#dfe3e8"/>
</svg>
</body></html>
